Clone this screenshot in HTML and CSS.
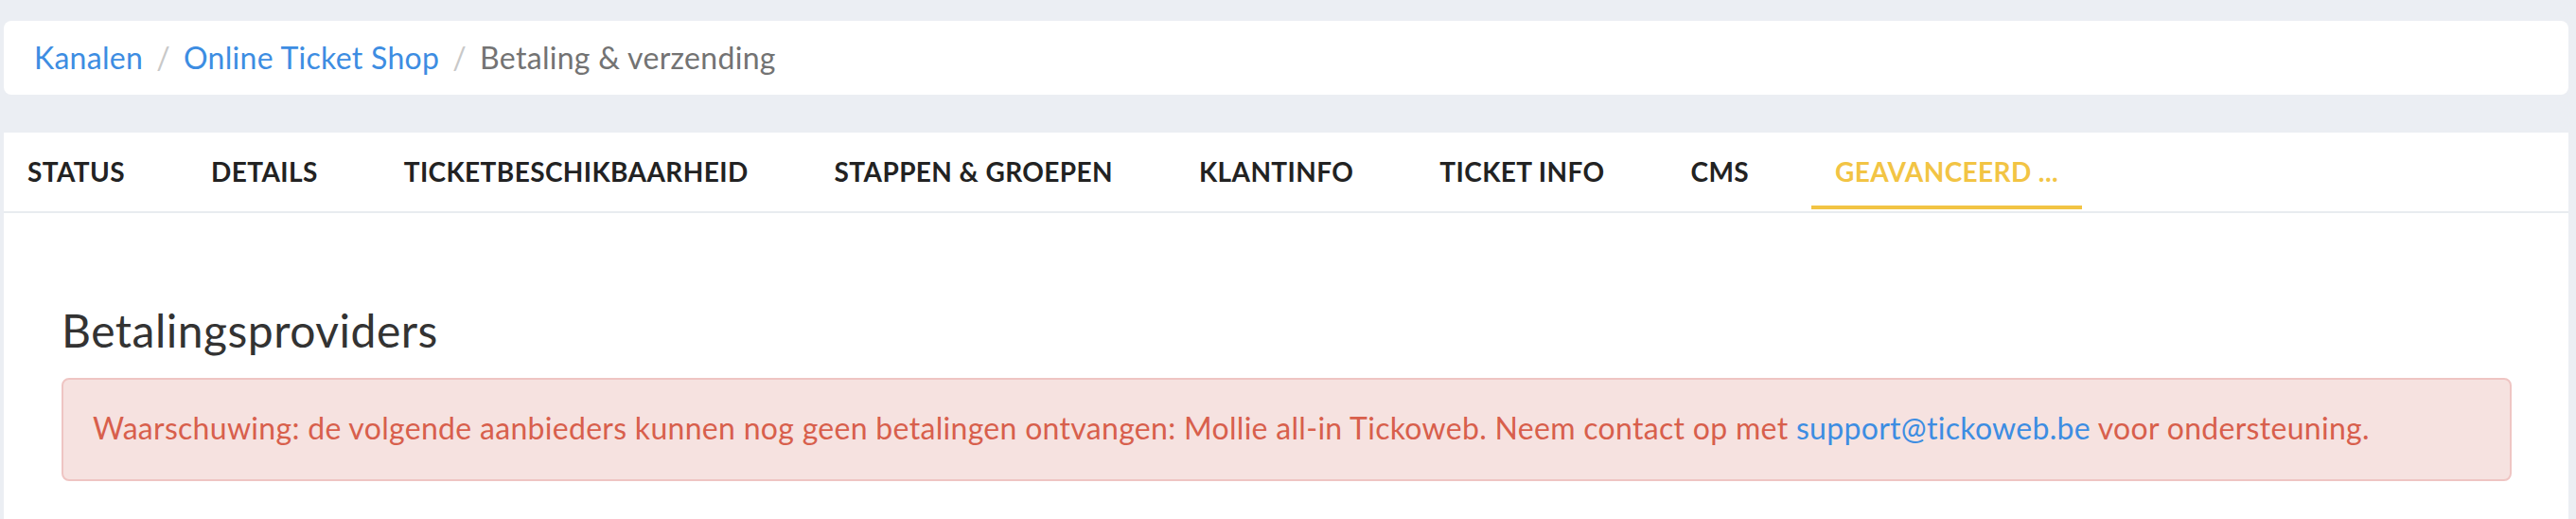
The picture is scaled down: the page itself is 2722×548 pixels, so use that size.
FILE: index.html
```html
<!DOCTYPE html>
<html lang="nl">
<head>
    <meta charset="UTF-8">
    <meta name="viewport" content="width=device-width, initial-scale=1.0">
    <title>Betaling &amp; verzending</title>
    <link rel="stylesheet" href="styles.css">
</head>
<body>
    <nav class="crumbs">
        <a href="#">Kanalen</a>
        <span class="sep">/</span>
        <a href="#">Online Ticket Shop</a>
        <span class="sep">/</span>
        <span class="current">Betaling &amp; verzending</span>
    </nav>

    <div class="panel">
        <ul class="tabs">
            <li><a href="#">Status</a></li>
            <li><a href="#">Details</a></li>
            <li><a href="#">Ticketbeschikbaarheid</a></li>
            <li><a href="#">Stappen &amp; groepen</a></li>
            <li><a href="#">Klantinfo</a></li>
            <li><a href="#">Ticket info</a></li>
            <li><a href="#">CMS</a></li>
            <li class="active"><a href="#">Geavanceerd ...</a></li>
        </ul>

        <div class="content">
            <h2>Betalingsproviders</h2>
            <div class="alert">
                Waarschuwing: de volgende aanbieders kunnen nog geen betalingen ontvangen: Mollie all-in Tickoweb. Neem contact op met <a href="#">support@tickoweb.be</a> voor ondersteuning.
            </div>
        </div>
    </div>
</body>
</html>
```

FILE: styles.css
```css
body {
    font-family: Lato, "Open Sans", sans-serif;
    font-size: 32px;
    line-height: 1.5;
    letter-spacing: 0.3px;
    background-color: #ebeef3;
    color: #333;
    margin: 0;
    padding: 22px 8px 0 4px;
}
a {
    color: #3d8de2;
    text-decoration: none;
}

/* breadcrumb */
.crumbs {
    display: flex;
    align-items: center;
    height: 78px;
    padding-left: 32px;
    background-color: #fff;
    border-radius: 8px;
    line-height: 1.4;
}
.crumbs .sep {
    color: #c8c8c8;
    margin: 0 14px;
}
.crumbs .current {
    color: #737373;
}

/* tabs panel */
.panel {
    margin-top: 40px;
    background-color: #fff;
    min-height: 420px;
}
.tabs {
    display: flex;
    gap: 41px;
    list-style: none;
    margin: 0;
    padding: 0;
    border-bottom: 2px solid #e8ecf0;
}
.tabs li {
    margin-bottom: 2px;
    border-bottom: 4px solid transparent;
}
.tabs a {
    display: block;
    padding: 25px 25px 20px;
    font-size: 28px;
    line-height: 1.15;
    font-weight: 700;
    letter-spacing: 0.4px;
    text-transform: uppercase;
    color: #222;
}
.tabs li.active {
    border-bottom-color: #f2c444;
}
.tabs li.active a {
    color: #f2c444;
}

.content {
    padding: 95px 60px 0 61px;
}
h2 {
    font-size: 48px;
    font-weight: 400;
    line-height: 1.2;
    letter-spacing: 0.5px;
    margin: 0 0 21px;
    color: #333;
}
.alert {
    background-color: #f6e2e0;
    border: 2px solid #efc5c3;
    border-radius: 8px;
    padding: 27px 31px 30px;
    color: #d85f4c;
}
```
